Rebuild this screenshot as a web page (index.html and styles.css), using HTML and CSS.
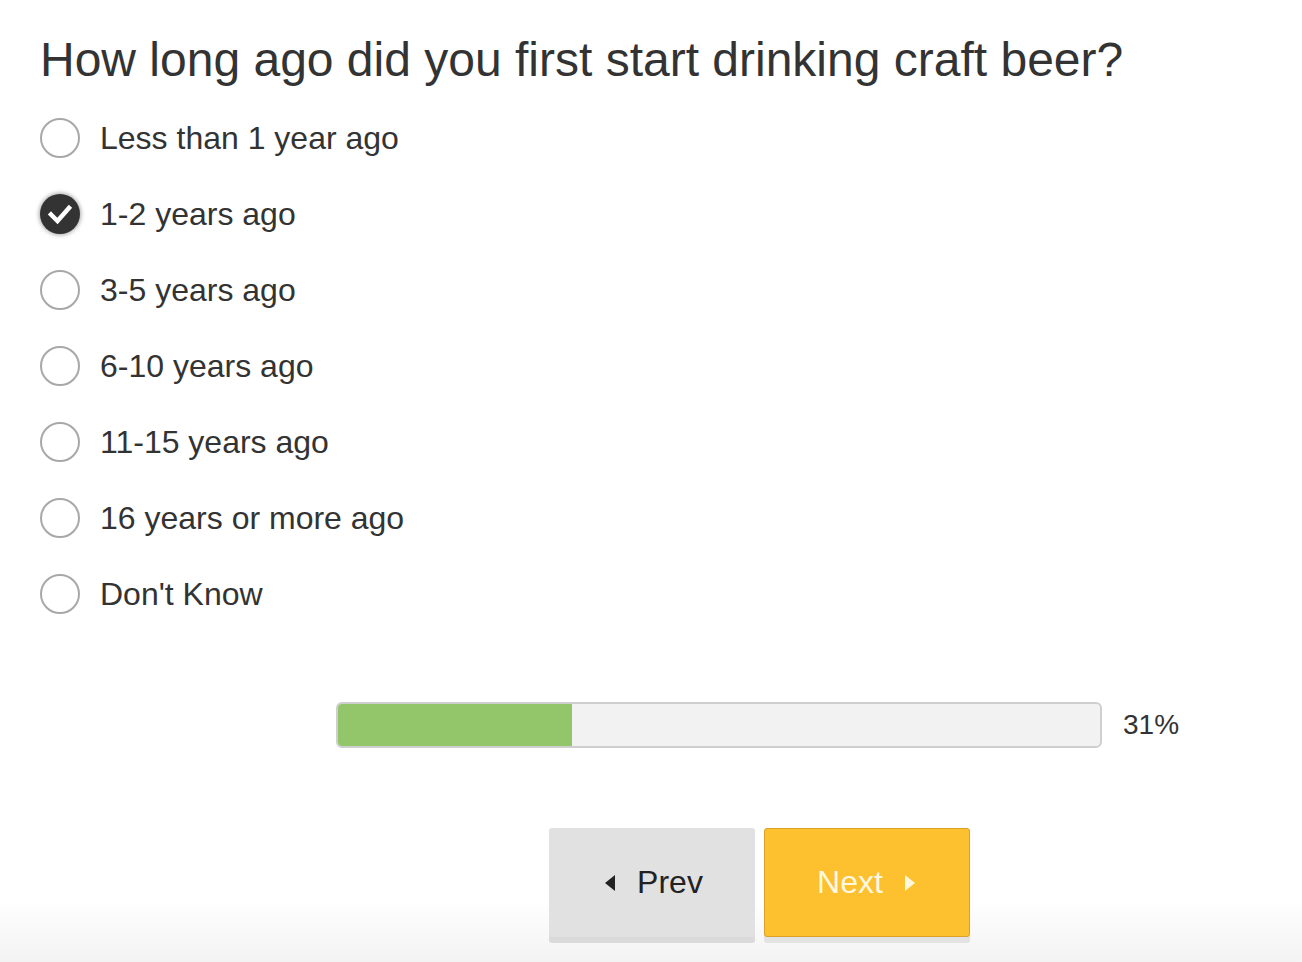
FILE: index.html
```html
<!DOCTYPE html>
<html lang="en">
<head>
    <meta charset="UTF-8">
    <title>Survey</title>
    <link rel="stylesheet" href="styles.css">
</head>
<body>
    <div class="survey">
        <h1 class="question">How long ago did you first start drinking craft beer?</h1>
        <ul class="options">
            <li class="option"><span class="radio"></span>Less than 1 year ago</li>
            <li class="option selected"><span class="radio">
                <svg viewBox="0 0 40 40" width="40" height="40"><path d="M11 20.5 L17.5 27 L29 14" fill="none" stroke="#fff" stroke-width="4.5" stroke-linecap="square"/></svg>
            </span>1-2 years ago</li>
            <li class="option"><span class="radio"></span>3-5 years ago</li>
            <li class="option"><span class="radio"></span>6-10 years ago</li>
            <li class="option"><span class="radio"></span>11-15 years ago</li>
            <li class="option"><span class="radio"></span>16 years or more ago</li>
            <li class="option"><span class="radio"></span>Don't Know</li>
        </ul>

        <div class="progress-row">
            <div class="progress-bar">
                <div class="progress-fill" style="width: 30.7%"></div>
            </div>
            <span class="progress-label">31%</span>
        </div>

        <div class="nav-buttons">
            <button class="btn btn-prev"><span class="arrow arrow-left"></span>Prev</button>
            <button class="btn btn-next">Next<span class="arrow arrow-right"></span></button>
        </div>
    </div>
</body>
</html>
```

FILE: styles.css
```css
html, body {
    margin: 0;
    padding: 0;
}
body {
    min-height: 100vh;
    font-family: "Liberation Sans", Arial, sans-serif;
    color: #333;
    background: linear-gradient(to bottom, #fff 0, #fff 900px, #f3f3f3 962px);
}
.survey {
    padding: 30px 0 0 40px;
}
.question {
    margin: 0 0 10px 0;
    font-size: 48px;
    font-weight: normal;
    line-height: 60px;
    color: #333;
}
.options {
    list-style: none;
    margin: 0;
    padding: 0;
}
.option {
    display: flex;
    align-items: center;
    height: 76px;
    font-size: 32px;
    color: #333;
}
.radio {
    box-sizing: border-box;
    width: 40px;
    height: 40px;
    border: 2px solid #a8a8a8;
    border-radius: 50%;
    margin-right: 20px;
    flex-shrink: 0;
    background: #fff;
}
.option.selected .radio {
    border: none;
    background: #333;
    box-shadow: 0 0 4px 1px rgba(0, 0, 0, 0.35);
}
.radio svg {
    display: block;
}
.progress-row {
    display: flex;
    align-items: center;
    margin: 70px 0 0 296px;
}
.progress-bar {
    box-sizing: border-box;
    width: 766px;
    height: 46px;
    border: 2px solid #cfcfcf;
    border-radius: 6px;
    background: #f2f2f2;
    overflow: hidden;
}
.progress-fill {
    height: 100%;
    background: #93c56b;
}
.progress-label {
    margin-left: 21px;
    font-size: 28px;
    color: #333;
}
.nav-buttons {
    display: flex;
    gap: 9px;
    margin: 80px 0 0 509px;
}
.btn {
    box-sizing: border-box;
    width: 206px;
    height: 109px;
    display: flex;
    align-items: center;
    justify-content: center;
    font-family: "Liberation Sans", Arial, sans-serif;
    font-size: 32px;
    border-radius: 3px;
    cursor: pointer;
    padding: 0;
}
.btn-prev {
    background: #e1e1e1;
    border: none;
    color: #222;
    box-shadow: 0 6px 0 #dadada;
    padding-left: 4px;
}
.btn-next {
    background: #fdc02f;
    border: 1px solid #d9a12a;
    color: #fff8e1;
    box-shadow: 0 6px 0 #e3e3e3;
    padding-right: 2px;
}
.arrow {
    width: 0;
    height: 0;
    border-top: 8px solid transparent;
    border-bottom: 8px solid transparent;
}
.arrow-left {
    border-right: 10px solid #222;
    margin-right: 22px;
}
.arrow-right {
    border-left: 10px solid #fff8e1;
    margin-left: 22px;
}
```
